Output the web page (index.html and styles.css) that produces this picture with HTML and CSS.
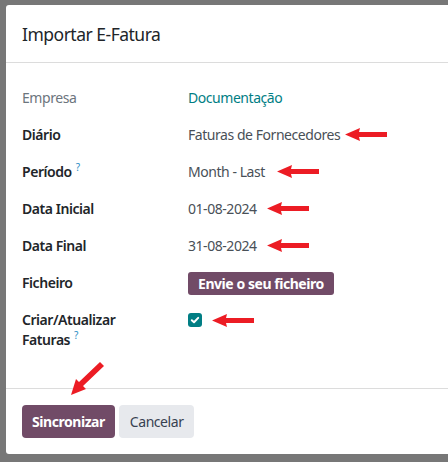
FILE: index.html
```html
<!DOCTYPE html>
<html lang="pt">
<head>
<meta charset="utf-8">
<title>Importar E-Fatura</title>
<link rel="stylesheet" href="styles.css">
</head>
<body>
<div class="modal">
  <header class="modal-header">
    <h4 class="modal-title">Importar E-Fatura</h4>
  </header>
  <main class="modal-body">
    <div class="row">
      <div class="label muted">Empresa</div>
      <div class="value"><a class="link" href="#">Documentação</a></div>
    </div>
    <div class="row">
      <div class="label">Diário</div>
      <div class="value">Faturas de Fornecedores</div>
    </div>
    <div class="row">
      <div class="label">Período<sup class="tip">?</sup></div>
      <div class="value">Month - Last</div>
    </div>
    <div class="row">
      <div class="label">Data Inicial</div>
      <div class="value">01-08-2024</div>
    </div>
    <div class="row">
      <div class="label">Data Final</div>
      <div class="value">31-08-2024</div>
    </div>
    <div class="row row-file">
      <div class="label">Ficheiro</div>
      <div class="value"><button class="btn-upload">Envie o seu ficheiro</button></div>
    </div>
    <div class="row row-check">
      <div class="label">Criar/Atualizar<br>Faturas<sup class="tip">?</sup></div>
      <div class="value">
        <span class="checkbox">
          <svg width="14" height="14" viewBox="0 0 14 14"><path d="M3.8 7.2 L6 9.2 L10.2 4.9" fill="none" stroke="#fff" stroke-width="2" stroke-linecap="round" stroke-linejoin="round"/></svg>
        </span>
      </div>
    </div>
  </main>
  <footer class="modal-footer">
    <button class="btn btn-primary">Sincronizar</button>
    <button class="btn btn-secondary">Cancelar</button>
  </footer>
</div>

<svg class="arrow" style="left:344px;top:127px" width="44" height="15" viewBox="0 0 44 15"><path d="M1 7.5 L16 1 L15 5 L43 5 L43 10 L15 10 L16 14 Z" fill="#ec1c24"/></svg>
<svg class="arrow" style="left:276px;top:164px" width="44" height="15" viewBox="0 0 44 15"><path d="M1 7.5 L16 1 L15 5 L43 5 L43 10 L15 10 L16 14 Z" fill="#ec1c24"/></svg>
<svg class="arrow" style="left:266px;top:201px" width="44" height="15" viewBox="0 0 44 15"><path d="M1 7.5 L16 1 L15 5 L43 5 L43 10 L15 10 L16 14 Z" fill="#ec1c24"/></svg>
<svg class="arrow" style="left:266px;top:238px" width="44" height="15" viewBox="0 0 44 15"><path d="M1 7.5 L16 1 L15 5 L43 5 L43 10 L15 10 L16 14 Z" fill="#ec1c24"/></svg>
<svg class="arrow" style="left:211px;top:313px" width="44" height="15" viewBox="0 0 44 15"><path d="M1 7.5 L16 1 L15 5 L43 5 L43 10 L15 10 L16 14 Z" fill="#ec1c24"/></svg>
<svg class="arrow" style="left:68px;top:360px" width="38" height="38" viewBox="0 0 38 38"><path d="M3 35 L8 19 L11 22 L32 2 L36 6 L15 26 L18 29 Z" fill="#ec1c24"/></svg>
</body>
</html>
```
FILE: styles.css
```css
html, body {
  margin: 0;
  padding: 0;
}
body {
  background: #777777;
  width: 448px;
  height: 462px;
  overflow: hidden;
  position: relative;
  font-family: "Noto Sans", "Open Sans", sans-serif;
  font-size: 14px;
  letter-spacing: -0.45px;
  color: #212529;
}
.modal {
  margin: 5px 0 0 6px;
  width: 442px;
  height: 449px;
  background: #ffffff;
  border-radius: 3px 0 0 3px;
  display: flex;
  flex-direction: column;
}
.modal-header {
  border-bottom: 1px solid #dcdcdc;
  padding: 0 16px;
  display: flex;
  align-items: center;
  box-sizing: border-box;
  height: 58px;
}
.modal-title {
  margin: 0;
  font-size: 17.5px;
  font-weight: 400;
  letter-spacing: -0.5px;
  color: #212529;
}
.modal-body {
  flex: 1;
  padding: 25px 16px 0;
  border-bottom: 1px solid #dcdcdc;
}
.row {
  display: flex;
  align-items: flex-start;
  height: 37px;
}
.label {
  width: 166px;
  font-weight: 600;
  color: #212529;
  line-height: 20px;
  flex-shrink: 0;
}
.label.muted {
  font-weight: 400;
  color: #6c757d;
}
.value {
  color: #495057;
  line-height: 20px;
}
.link {
  color: #017e84;
  text-decoration: none;
}
.tip {
  color: #2a8cc4;
  font-weight: 400;
  font-size: 10px;
  margin-left: 4px;
  vertical-align: top;
  line-height: 10px;
}
.btn-upload {
  font-family: inherit;
  font-size: 14px;
  letter-spacing: -0.45px;
  font-weight: 700;
  color: #ffffff;
  background: #714b67;
  border: none;
  border-radius: 3px;
  padding: 0 10px;
  height: 23px;
  margin-top: -1px;
}
.checkbox {
  display: inline-flex;
  width: 14px;
  height: 14px;
  background: #017e84;
  border-radius: 3px;
  margin-top: 3px;
}
.modal-footer {
  padding: 16px;
  display: flex;
  gap: 4px;
}
.btn {
  font-family: inherit;
  font-size: 14px;
  letter-spacing: -0.45px;
  height: 33px;
  border: none;
  border-radius: 4px;
  padding: 0 10px;
}
.btn-primary {
  background: #714b67;
  color: #ffffff;
  font-weight: 700;
}
.btn-secondary {
  background: #e7e9ed;
  color: #374151;
  padding: 0 11px;
}
.arrow {
  position: absolute;
}
```
